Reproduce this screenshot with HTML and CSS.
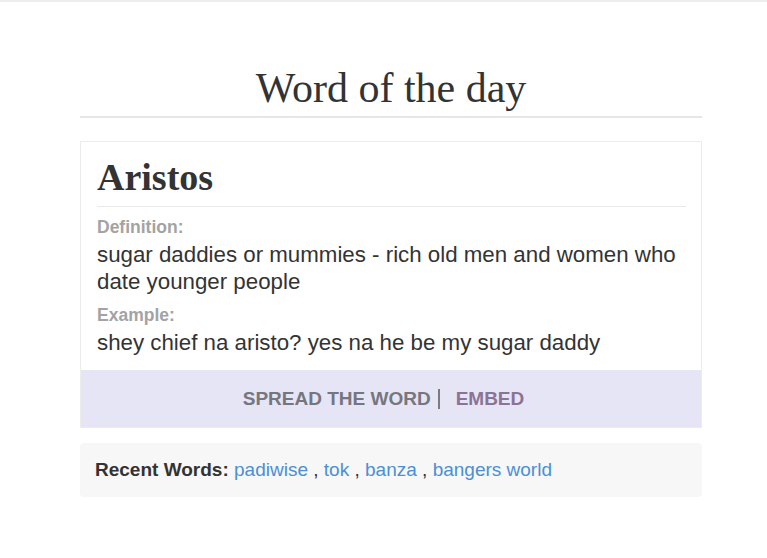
FILE: index.html
```html
<!DOCTYPE html>
<html lang="en">
<head>
<meta charset="utf-8">
<title>Word of the day</title>
<link rel="stylesheet" href="styles.css">
</head>
<body>
<div class="page">
  <main class="wrap">
    <h1 class="title">Word of the day</h1>
    <section class="card">
      <div class="card-body">
        <h2 class="word">Aristos</h2>
        <div class="label label-def">Definition:</div>
        <p class="text">sugar daddies or mummies - rich old men and women who date younger people</p>
        <div class="label label-ex">Example:</div>
        <p class="text">shey chief na aristo? yes na he be my sugar daddy</p>
      </div>
      <div class="band">
        <span class="spread">SPREAD THE WORD</span>
        <span class="sep"></span>
        <span class="embed">EMBED</span>
      </div>
    </section>
    <div class="recent">
      <strong>Recent Words:</strong>
      <a href="#">padiwise</a> , <a href="#">tok</a> , <a href="#">banza</a> , <a href="#">bangers world</a>
    </div>
  </main>
</div>
</body>
</html>
```

FILE: styles.css
```css
html, body {
  margin: 0;
  padding: 0;
  background: #ffffff;
}

.page {
  border-top: 2px solid #ededed;
  min-height: 556px;
}

.wrap {
  width: 622px;
  margin-left: 80px;
  font-family: "Liberation Sans", Arial, sans-serif;
  color: #333333;
}

.title {
  margin: 62px 0 0 0;
  padding-bottom: 4px;
  border-bottom: 2px solid #e6e6e6;
  font-family: "Liberation Serif", "Times New Roman", serif;
  font-weight: normal;
  font-size: 42px;
  line-height: 48px;
  text-align: center;
  color: #333333;
}

.card {
  margin-top: 23px;
  border: 1px solid #ececec;
  background: #ffffff;
}

.card-body {
  padding: 13px 15px 14px 16px;
}

.word {
  margin: 0;
  padding-bottom: 7px;
  border-bottom: 1px solid #e9e9e9;
  font-family: "Liberation Serif", "Times New Roman", serif;
  font-weight: bold;
  font-size: 38px;
  line-height: 44px;
  color: #333333;
}

.label {
  font-weight: bold;
  font-size: 17.5px;
  line-height: 20px;
  color: #a3a3a3;
}

.label-def {
  margin-top: 10px;
}

.label-ex {
  margin-top: 10px;
}

.text {
  margin: 4px 0 0 0;
  font-size: 22.3px;
  line-height: 27px;
  color: #333333;
}

.band {
  display: flex;
  align-items: center;
  justify-content: center;
  height: 57px;
  padding-right: 15px;
  background: #e6e5f5;
  font-weight: bold;
  font-size: 19px;
}

.spread {
  color: #76767e;
}

.sep {
  width: 2px;
  height: 20px;
  margin: 0 16px 0 7px;
  background: #7a7a80;
}

.embed {
  color: #8b7396;
}

.recent {
  margin-top: 15px;
  height: 54px;
  padding-left: 15px;
  border-radius: 4px;
  background: #f7f7f7;
  font-size: 19px;
  line-height: 54px;
  color: #333333;
}

.recent strong {
  font-weight: bold;
}

.recent a {
  color: #4a90d4;
  text-decoration: none;
}
```
